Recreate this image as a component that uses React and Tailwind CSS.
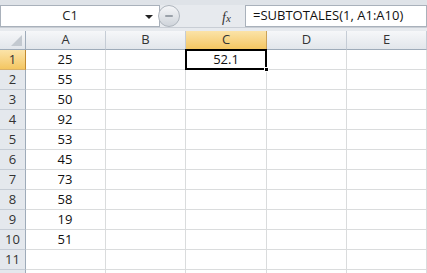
import React from "react";

const values = [25, 55, 50, 92, 53, 45, 73, 58, 19, 51, "", ""];
const cols = ["A", "B", "C", "D", "E"];

function ColHead({ label, active }) {
  return (
    <div
      className={
        "h-[19px] flex items-center justify-center border-r border-b text-[13px] " +
        (active
          ? "bg-gradient-to-b from-[#fbe3a8] to-[#f4c660] border-r-[#c9a25a] border-b-[#c28a30] text-[#333]"
          : "bg-gradient-to-b from-[#f6f7f9] to-[#e2e6eb] border-r-[#c5ccd5] border-b-[#9eabb9] text-[#333]")
      }
    >
      {label}
    </div>
  );
}

function RowHead({ n, active }) {
  return (
    <div
      className={
        "h-[20px] flex items-center justify-center border-r border-b text-[13px] " +
        (active
          ? "bg-gradient-to-b from-[#fbe3a8] to-[#f4c660] border-r-[#c28a30] border-b-[#d8b06a] text-[#333]"
          : "bg-[#e4e8ed] border-r-[#9eabb9] border-b-[#c5ccd5] text-[#333]")
      }
    >
      {n}
    </div>
  );
}

export default function App() {
  return (
    <div
      className="w-[427px] h-[273px] overflow-hidden bg-white"
      style={{ fontFamily: '"Open Sans", "Liberation Sans", sans-serif' }}
    >
      <div className="h-[5px] bg-[#dfe3e8]" />
      {/* formula bar */}
      <div className="h-[23px] flex bg-[#e7eaee] border-b border-[#c9ced5]">
        <div className="w-[160px] h-full bg-white border border-[#a9b1bb] flex items-center relative">
          <span className="flex-1 text-center text-[13px] text-[#222] pr-[20px]">C1</span>
          <span className="absolute right-[6px] top-[9px] w-0 h-0 border-l-[4px] border-r-[4px] border-t-[4px] border-l-transparent border-r-transparent border-t-[#222]" />
        </div>
        <div className="w-[85px] flex items-center relative">
          <div className="-ml-[2px] w-[22px] h-[22px] rounded-full bg-gradient-to-b from-[#f5f6f8] to-[#cfd4da] border border-[#aeb5bd] flex items-center justify-center">
            <div className="w-[8px] h-[2px] bg-[#9aa1a9] rounded" />
          </div>
          <span className="absolute left-[62px] top-[2px] text-[14px] italic text-[#333]" style={{ fontFamily: '"Liberation Serif", serif' }}>
            f<span className="text-[11px]">x</span>
          </span>
        </div>
        <div className="flex-1 h-full bg-white border border-[#a9b1bb] flex items-center pl-[7px] text-[13px] text-[#111]">
          =SUBTOTALES(1, A1:A10)
        </div>
      </div>
      <div className="h-[3px] bg-[#e7eaee]" />
      {/* grid */}
      <div className="grid grid-cols-[26px_80px_80px_81px_80px_80px]">
        <div className="h-[19px] bg-gradient-to-b from-[#f6f7f9] to-[#e2e6eb] border-r border-b border-r-[#9eabb9] border-b-[#9eabb9] relative">
          <span className="absolute right-[3px] bottom-[3px] w-0 h-0" style={{ borderBottom: "11px solid #c3c9d0", borderLeft: "11px solid transparent" }} />
        </div>
        {cols.map((c) => (
          <ColHead key={c} label={c} active={c === "C"} />
        ))}
        {values.map((v, i) => (
          <React.Fragment key={i}>
            <RowHead n={i < 11 ? i + 1 : ""} active={i === 0} />
            <div className="h-[20px] border-r border-b border-[#dadcdd] flex items-center justify-center text-[13px] text-[#111] pr-[1px]">
              {v}
            </div>
            <div className="h-[20px] border-r border-b border-[#dadcdd]" />
            {i === 0 ? (
              <div className="h-[20px] relative border-r border-b border-[#dadcdd]">
                <div className="absolute -left-[1px] -top-[1px] w-[82px] h-[21px] border-2 border-black flex items-center justify-center text-[13px] text-[#111]">
                  52.1
                </div>
                <div className="absolute -right-[3px] -bottom-[3px] w-[5px] h-[5px] bg-black border border-white" />
              </div>
            ) : (
              <div className="h-[20px] border-r border-b border-[#dadcdd]" />
            )}
            <div className="h-[20px] border-r border-b border-[#dadcdd]" />
            <div className="h-[20px] border-r border-b border-[#dadcdd]" />
          </React.Fragment>
        ))}
      </div>
    </div>
  );
}
